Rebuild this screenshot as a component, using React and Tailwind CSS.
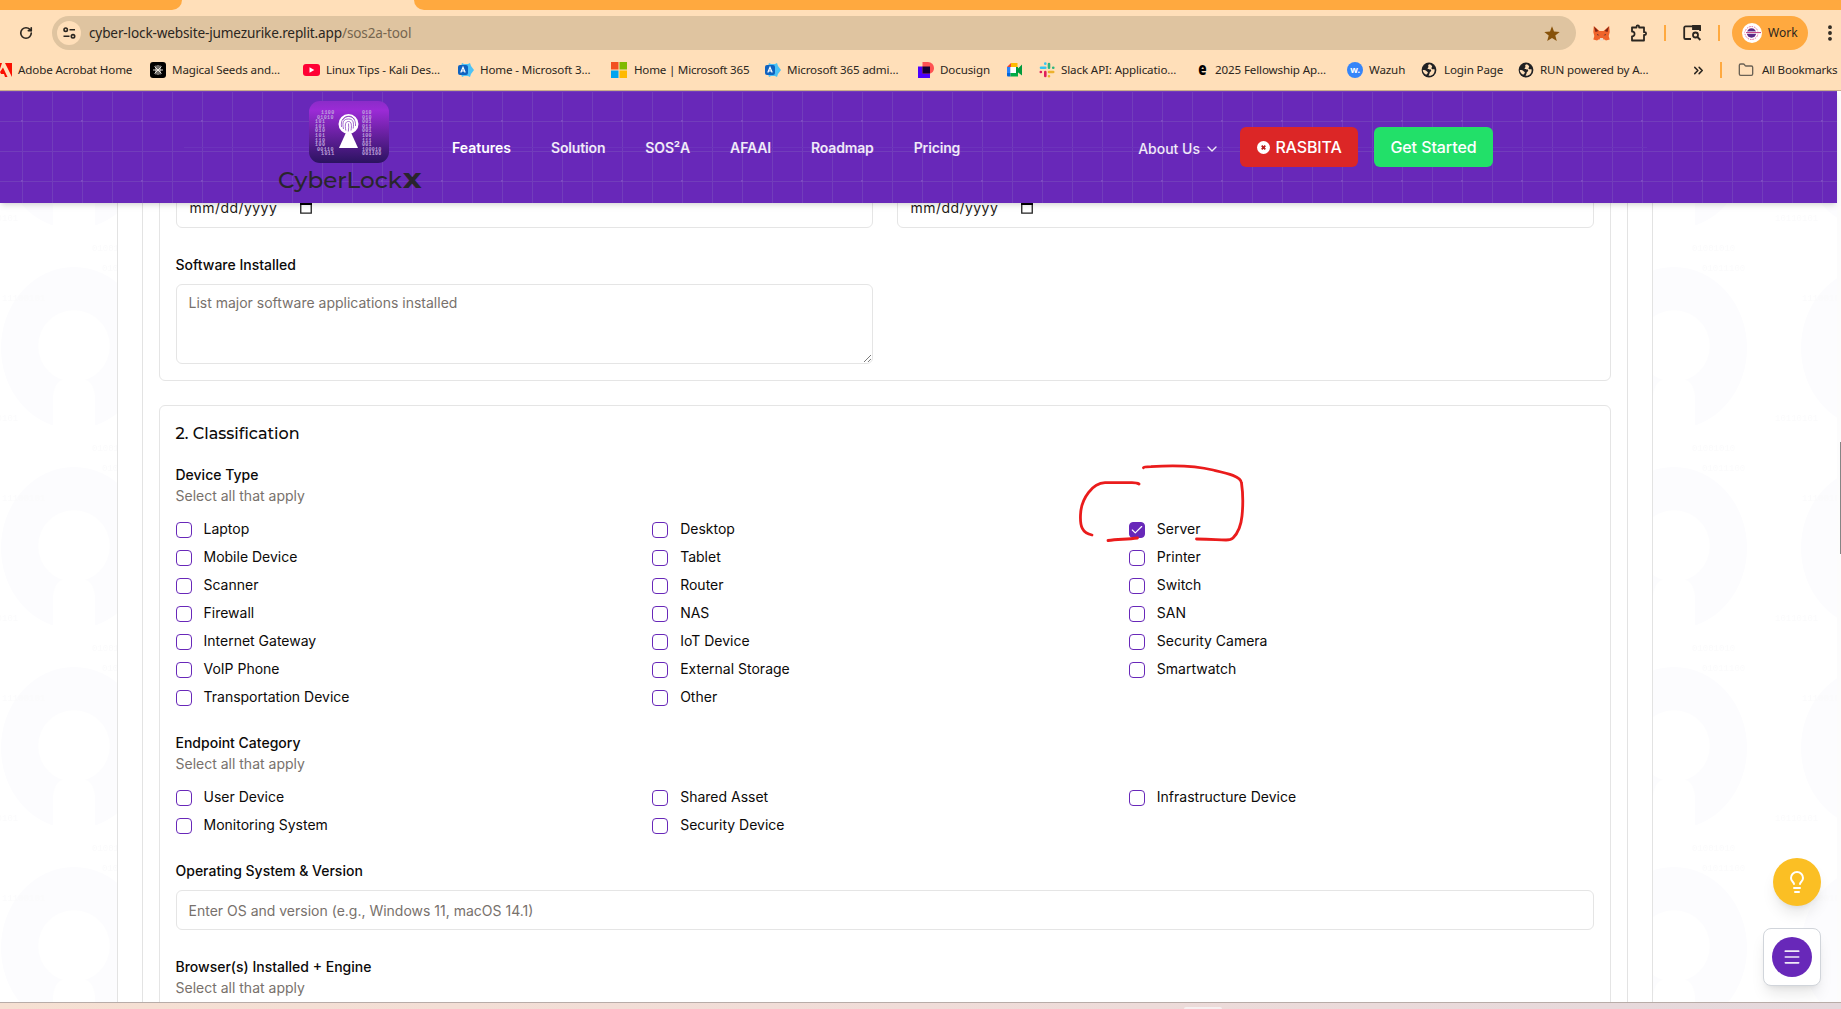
import React from "react";
import { RotateCw, ChevronsRight, Folder, ChevronDown, Check, Lightbulb, Menu, EllipsisVertical } from "lucide-react";

const INTER = "font-['Inter',sans-serif]";

function Azure() {
  return (
    <svg width="16" height="16" viewBox="0 0 16 16">
      <path d="M4 1l2 1h4l2-1 1 3 3 4-3 4-1 3-2-1H6l-2 1-1-3V4z" fill="#4cc2f5" />
      <rect x="0" y="3" width="10" height="10" rx="2" fill="#0f62c0" />
      <path d="M2.8 10.5L5 5.2l2.2 5.3M3.6 9h2.8" stroke="#fff" strokeWidth="1.2" fill="none" />
    </svg>
  );
}

function Globe() {
  return (
    <svg width="16" height="16" viewBox="0 0 16 16">
      <circle cx="8" cy="8" r="7.4" fill="#202124" />
      <path d="M9 2.2c-2 .2-2 1.300-1.600 2.300.5 1-1.400 1.600-.6 2.500.8.8 3.200-.2 3.400 1.400 0 1.200-1.600 1.200-1.600 2.600 0 1-.6 1.800-1.200 2.600 4 .6 6.600-2.600 6.200-6.200-1-.4-2.400.4-3-.6-.6-1 1-2 .4-2.800C10.600 3.400 10 2.800 9 2.200zM1.800 8c1.400-.2 2.800.2 3.600 1 .8.900 1.800.9 1.400 2-.3.900-1.200.8-1.400 1.800C3.200 12 1.900 10 1.800 8z" fill="#ffdfb9" />
    </svg>
  );
}

const bookmarks = [
  { x: "w-[150px]", gap: "gap-[6px]", label: "Adobe Acrobat Home", icon: (
    <svg width="12" height="16" viewBox="0 0 12 16"><path d="M0 1h2L0 7zM5 1h7v14zM3 5.500l4.500 9.500H5L4 12H1L0 10z" fill="#fa0f00" /></svg>) },
  { x: "w-[153px]", gap: "gap-[6px]", label: "Magical Seeds and...", icon: (
    <svg width="16" height="16" viewBox="0 0 16 16"><rect width="16" height="16" rx="3" fill="#000" /><path d="M8 3v10M3 8h10M4.500 4.500l7 7M11.500 4.500l-7 7M6 3.500v9M10 3.500v9" stroke="#f3eee8" strokeWidth=".9" /></svg>) },
  { x: "w-[155px]", gap: "gap-[6px]", label: "Linux Tips - Kali Des...", icon: (
    <svg width="17" height="12" viewBox="0 0 17 12"><rect width="17" height="12" rx="3" fill="#ff0033" /><path d="M6.500 3.300v5.400L11.300 6z" fill="#fff" /></svg>) },
  { x: "w-[153px]", gap: "gap-[6px]", label: "Home - Microsoft 3...", icon: <Azure /> },
  { x: "w-[154px]", gap: "gap-[7px]", label: "Home | Microsoft 365", tight: true, icon: (
    <svg width="16" height="16" viewBox="0 0 16 16"><path d="M0 0h7.500v7.500H0z" fill="#f25022" /><path d="M8.500 0H16v7.500H8.500z" fill="#7fba00" /><path d="M0 8.500h7.500V16H0z" fill="#00a4ef" /><path d="M8.500 8.500H16V16H8.500z" fill="#ffb900" /></svg>) },
  { x: "w-[153px]", gap: "gap-[6px]", label: "Microsoft 365 admi...", icon: <Azure /> },
  { x: "w-[89px]", gap: "gap-[6px]", label: "Docusign", icon: (
    <svg width="16" height="16" viewBox="0 0 16 16"><path d="M0 4.500h12V16H0z" fill="#4c00ff" /><path d="M4.500 0H10a6 6 0 016 6c0 3-2 5.500-4.500 5.500h-7z" fill="#ff5252" /><path d="M4.500 4.500h7.500v7h-7.500z" fill="#130032" /></svg>) },
  { x: "w-[32px]", gap: "gap-0", label: "", icon: (
    <svg width="15" height="14" viewBox="0 0 15 14"><path d="M0 4l4-4v4z" fill="#ea4335" /><path d="M0 4h3.500v6H0z" fill="#2684fc" /><path d="M0 10h3.500v3.500H1a1 1 0 01-1-1z" fill="#0066da" /><path d="M4 0h6.500v4H4z" fill="#ffba00" /><path d="M3.500 10H11v3.500H3.500z" fill="#00ac47" /><path d="M3.500 4H9v6H3.500z" fill="#fff" /><path d="M9 4h2v6H9zM10.500 6L15 1.500v11L10.500 9z" fill="#009a3e" /></svg>) },
  { x: "w-[158px]", gap: "gap-[6px]", label: "Slack API: Applicatio...", icon: (
    <svg width="16" height="16" viewBox="0 0 16 16" strokeWidth="2.600" strokeLinecap="round"><path d="M6.300 1.600v.1M6.300 5.800H2" stroke="#36c5f0" /><path d="M10 2v3.800M14.200 5.800h.1" stroke="#2eb67d" /><path d="M10 10h4.200M10 14.200v.1" stroke="#ecb22e" /><path d="M1.800 10h.1M6.300 10v4" stroke="#e01e5a" /></svg>) },
  { x: "w-[150px]", gap: "gap-[9px]", label: "2025 Fellowship Ap...", icon: <span className="-mt-[3px] w-[9px] scale-x-75 text-[18px] leading-4 font-black text-black">e</span> },
  { x: "w-[74px]", gap: "gap-[6px]", label: "Wazuh", icon: <span className="flex h-4 w-4 items-center justify-center rounded-full bg-[#3585f9] text-[9px] font-bold text-white">w.</span> },
  { x: "w-[97px]", gap: "gap-[7px]", label: "Login Page", icon: <Globe /> },
  { x: "w-[173px]", gap: "gap-[6px]", label: "RUN powered by A...", icon: <Globe /> },
];

function Chrome() {
  return (
    <div className="h-[91px] border-b border-[#c9ad8b] bg-[#ffdfb9] font-['Noto_Sans',sans-serif] text-[#2b2620]">
      <div className="flex h-[10px] justify-between">
        <div className="w-[182px] rounded-br-[10px] bg-[#ffa93f]" />
        <div className="w-[1427px] rounded-bl-[10px] bg-[#ffa93f]" />
      </div>
      <div className="mt-[6px] flex h-[34px] items-center">
        <RotateCw className="ml-[19px] h-[14px] w-[14px] shrink-0" strokeWidth={2.8} />
        <div className="ml-[19px] flex h-[34px] w-[1524px] shrink-0 items-center rounded-full bg-[#dfc4a0]">
          <div className="ml-[5px] flex h-6 w-6 shrink-0 items-center justify-center rounded-full bg-[#ffdfb9]">
            <svg width="13" height="12" viewBox="0 0 13 12" fill="none" stroke="#2b2620" strokeWidth="1.600"><circle cx="2.700" cy="2.700" r="1.700" /><path d="M6.500 2.700H12M0.500 9.300h6" /><circle cx="10" cy="9.300" r="1.700" /></svg>
          </div>
          <div className="ml-[8px] w-[1455px] shrink-0 text-[13.6px] tracking-[-0.15px] whitespace-nowrap">cyber-lock-website-jumezurike.replit.app<span className="text-[#76664f]">/sos2a-tool</span></div>
          <svg className="mt-[2px] shrink-0" width="16" height="16" viewBox="0 0 16 16"><path d="M8 .3l2 5.300 5.700.3-4.400 3.600 1.500 5.500L8 11.900 3.200 15l1.500-5.500L.3 5.900 6 5.600z" fill="#87520a" /></svg>
        </div>
        <svg className="ml-[17px] shrink-0" width="17" height="15" viewBox="0 0 17 15"><path d="M.8 0l5.700 5h4l5.700-5 .5 6-1 4 1 3.500-3.700 1-1.500-1H5.500l-1.500 1-3.700-1 1-3.500-1-4z" fill="#f0632a" /><path d="M1 .5l4.500 4.500L2.500 6zM16 .5L11.500 5l3 1z" fill="#7c2416" /><path d="M4 8l2.500 1.300H4.500zM13 8l-2.500 1.300h2z" fill="#2b2a3a" /><path d="M6.500 14.500h4L10 12H7z" fill="#e9dccb" /></svg>
        <svg className="ml-[20px] shrink-0" width="18" height="18" viewBox="0 0 18 18" fill="none" stroke="#2b2620" strokeWidth="1.800" strokeLinejoin="round"><path d="M2 3.500h4.500V2.700a1.300 1.300 0 012.600 0v.8H14v4.700h.7a1.400 1.400 0 010 2.800H14v5.500H2v-4.200c3.400.2 3.400-5 0-4.800z" /></svg>
        <div className="ml-[16px] h-4 w-[2px] shrink-0 bg-[#ffa93f]" />
        <svg className="ml-[17px] shrink-0" width="19" height="16" viewBox="0 0 19 16" fill="none" stroke="#2b2620" strokeWidth="1.800"><path d="M8 14H2.500a1.300 1.300 0 01-1.300-1.300V2.700A1.300 1.300 0 012.500 1.400h13.300a1.300 1.300 0 011.300 1.300V6" /><path d="M10 1h7v3h-7z" fill="#2b2620" /><circle cx="12.500" cy="10" r="2.500" /><path d="M14.400 12l3 3" /></svg>
        <div className="ml-[16px] h-4 w-[2px] shrink-0 bg-[#ffa93f]" />
        <div className="ml-[12px] flex h-[34px] w-[76px] shrink-0 items-center gap-[6px] rounded-full bg-[#ffa93f] pl-[10px] text-[12px]">
          <svg width="20" height="20" viewBox="0 0 20 20"><circle cx="10" cy="10" r="10" fill="#fff" /><circle cx="9.500" cy="10" r="6.500" fill="none" stroke="#e4629b" strokeWidth="1" strokeDasharray="1.500 1" /><circle cx="9.500" cy="10" r="4.700" fill="#5b2a86" /><path d="M3 9.600h16" stroke="#fff" strokeWidth="2.400" /><path d="M4 9.600h15" stroke="#c0397b" strokeWidth="1" /></svg>
          Work
        </div>
        <EllipsisVertical className="ml-[12px] h-5 w-5 shrink-0" strokeWidth={2.6} />
      </div>
      <div className="mt-[11px] flex h-[18px] items-center text-[11.6px] tracking-[-0.13px] whitespace-nowrap">
        {bookmarks.map((b, i) => (
          <div key={i} className={`flex shrink-0 items-center ${b.x} ${b.gap} ${b.tight ? "tracking-[-0.22px]" : ""}`}>{b.icon}<span>{b.label}</span></div>
        ))}
        <ChevronsRight className="h-[15px] w-[15px] shrink-0" strokeWidth={2.4} />
        <div className="ml-[14px] h-4 w-[2px] shrink-0 bg-[#ffa93f]" />
        <Folder className="ml-[16px] h-4 w-4 shrink-0 text-[#6b6255]" />
        <span className="ml-[8px] tracking-[-0.2px]">All Bookmarks</span>
      </div>
    </div>
  );
}

function Logo() {
  const left = ["   1100", " 01010", "101", "101", "010", "101", "110", "100", " 00110", "   1011"];
  const right = ["010", "010", "001", "011", "001", "100", "111", "001", "100010", "001100"];
  return (
    <div className="flex w-[146px] flex-col items-center">
      <svg className="-ml-[2px]" width="80" height="62" viewBox="0 0 80 62">
        <defs>
          <linearGradient id="logoFill" x1="0" y1="0" x2="0" y2="1"><stop offset="0" stopColor="#8b2cc9" /><stop offset=".15" stopColor="#9b2bd6" /><stop offset="1" stopColor="#2b1360" /></linearGradient>
        </defs>
        <rect width="80" height="62" rx="11" fill="url(#logoFill)" />
        <g fill="#bfa3dd" fontFamily="Liberation Mono, monospace" fontSize="5">
          {left.map((t, i) => <text key={i} x={6 + (t.length - t.trimStart().length) * 2} y={13.2 + i * 4.55} textLength={t.trim().length * 3.3}>{t.trim()}</text>)}
          {right.map((t, i) => <text key={i} x="53" y={13.2 + i * 4.55} textLength={t.length * 3.2}>{t}</text>)}
        </g>
        <path d="M39.500 26l9.500 21H30z" fill="#fff" /><circle cx="39.500" cy="23" r="10" fill="#fff" />
        <g fill="none" stroke="#7b2bb8" strokeWidth=".7">
          <path d="M32.500 26c-1-8 3-10.500 7-10.500s7.500 3 7 9.500M34.500 28c-1.500-7 0-10 5-10s5.500 4 4.700 9.500M36.800 29.500c-1-6-.5-9 2.700-9s3.300 4 2.500 9M39.300 30.500c.4-3 .6-5.500.2-8M33.800 19c3-5 9-5 11.700-.5" />
        </g>
      </svg>
      <svg className="mt-[4px]" width="146" height="25" viewBox="0 0 146 25" fill="#29252c">
        <text x="1" y="20.500" textLength="124" lengthAdjust="spacingAndGlyphs" fontFamily="Montserrat, Inter, sans-serif" fontSize="21.500" fontWeight="500">CyberLock</text>
        <text x="126" y="20.500" textLength="18.500" lengthAdjust="spacingAndGlyphs" fontFamily="Montserrat, Inter, sans-serif" fontSize="21.500" fontWeight="800">X</text>
      </svg>
    </div>
  );
}

function SiteHeader() {
  return (
    <header className={`relative z-20 h-[112px] w-[1837px] bg-[#6828b9] shadow-md ${INTER}`}>
      <svg className="absolute inset-0" width="1837" height="112">
        <defs>
          <pattern id="grid" x="22" y="0" width="30" height="30" patternUnits="userSpaceOnUse">
            <path d="M.5 0v30M0 .5h30" stroke="#723dbb" />
          </pattern>
          <pattern id="dots" x="21" y="29" width="60" height="60" patternUnits="userSpaceOnUse"><rect width="2" height="2" fill="#7d4ac2" /></pattern>
        </defs>
        <rect width="1837" height="112" fill="url(#grid)" />
        <rect width="1837" height="112" fill="url(#dots)" />
        <path d="M184 56.500h1463" stroke="#6d33bc" />
      </svg>
      <div className="relative flex h-full items-center text-[14px] font-semibold text-white/90">
        <div className="ml-[277px] pb-[2px]"><Logo /></div>
        <nav className="ml-[29px] flex items-center gap-[40px] whitespace-nowrap [&>a]:tracking-[-0.15px] [&>a:first-child]:tracking-normal [&>a:first-child]:text-white">
          <a>Features</a><a>Solution</a><a>SOS²A</a><a>AFAAI</a><a>Roadmap</a><a>Pricing</a>
        </nav>
        <div className="mr-[344px] ml-auto flex items-center">
          <div className="flex items-center gap-[4px] pt-[3px] font-medium">About Us <ChevronDown className="h-4 w-4" strokeWidth={2} /></div>
          <div className="ml-[20px] flex h-10 w-[118px] items-center justify-center gap-[5px] rounded-md bg-[#dc2626] pl-px text-[16px] font-medium tracking-[-0.15px] text-white">
            <svg width="13" height="13" viewBox="0 0 13 13"><circle cx="6.500" cy="6.500" r="6.500" fill="#fff" /><path d="M4.700 4.700l3.600 3.600M8.300 4.700L4.700 8.300" stroke="#b91c1c" strokeWidth="1.800" /></svg>
            RASBITA
          </div>
          <div className="ml-[16px] flex h-10 w-[119px] items-center justify-center rounded-md bg-[#22e069] text-[16px] font-medium tracking-[-0.08px] text-white">Get Started</div>
        </div>
      </div>
    </header>
  );
}

function DateField() {
  return (
    <div className="flex h-10 items-center rounded-md border border-[#e5e5e5] px-[13px] text-[14px] text-[#1f1b19]">
      <span className="w-[110px] pb-[2px] tracking-[0.45px]">mm/dd/yyyy</span>
      <svg width="12" height="12" viewBox="0 0 12 12"><path d="M.75 1.200h10.500v10H.75z" fill="none" stroke="#222" strokeWidth="1.300" /><path d="M0 0h12v3H0z" fill="#000" /></svg>
    </div>
  );
}

function Field({ label, hint, children, className = "" }) {
  return (
    <div className={className}>
      <div className="text-[14px] leading-[14px] font-medium text-[#0c0a09]">{label}</div>
      {hint && <div className="mt-[4px] text-[14px] leading-5 text-[#78716c]">{hint}</div>}
      {children}
    </div>
  );
}

function Checks({ items, checked }) {
  return (
    <div className="mt-4 grid grid-cols-3 gap-3">
      {items.map((t) => (
        <div key={t} className="flex h-4 items-start gap-3">
          <span className={`flex h-4 w-4 items-center justify-center rounded-[4px] border border-[#6828b9] ${t === checked ? "bg-[#6828b9]" : "bg-white"}`}>
            {t === checked && <Check className="h-[14px] w-[14px] shrink-0 text-white" strokeWidth={2} />}
          </span>
          <span className="text-[14px] leading-[14px] text-[#0c0a09]">{t}</span>
        </div>
      ))}
    </div>
  );
}

const deviceTypes = ["Laptop", "Desktop", "Server", "Mobile Device", "Tablet", "Printer", "Scanner", "Router", "Switch", "Firewall", "NAS", "SAN", "Internet Gateway", "IoT Device", "Security Camera", "VoIP Phone", "External Storage", "Smartwatch", "Transportation Device", "Other"];
const categories = ["User Device", "Shared Asset", "Infrastructure Device", "Monitoring System", "Security Device"];

function Backdrop() {
  return (
    <svg className="absolute inset-0" width="1837" height="799">
      <defs>
        <pattern id="keyholes" x="-26" y="53" width="200" height="200" patternUnits="userSpaceOnUse">
          <ellipse cx="100" cy="92" rx="73" ry="81" fill="#fcfcfe" />
          <circle cx="100" cy="90" r="36" fill="#fff" />
          <path d="M79 200v-61q2-15 12-16h18q10 1 12 16v61z" fill="#fff" />
          <g fill="#fbfbfc" fontFamily="Liberation Mono, monospace" fontSize="9">
            <text x="28" y="45">11100101</text><text x="128" y="15">01011100</text><text x="1" y="165">10110101</text><text x="118" y="195">01001010</text>
          </g>
        </pattern>
      </defs>
      <rect width="1837" height="799" fill="url(#keyholes)" />
    </svg>
  );
}

function FormPage() {
  return (
    <main className={`relative flex h-[799px] w-[1837px] overflow-hidden bg-white ${INTER}`}>
      <Backdrop />
      <div className="relative ml-[116.5px] h-[799px] w-[1536px] border-x border-[#e3e3e3] bg-white px-6">
        <div className="flex h-full flex-col border-x border-[#e3e3e3] px-4">
          <section className="-mt-[40px] h-[218px] shrink-0 rounded-md border border-[#e5e5e5] px-4 pt-[24px]">
            <div className="grid grid-cols-2 gap-6"><DateField /><DateField /></div>
            <Field label="Software Installed" className="mt-[30px] w-[697px]">
              <div className="relative mt-[12px] h-20 rounded-md border border-[#e5e5e5] px-3 py-2 text-[14px] leading-5 text-[#78716c]">
                List major software applications installed
                <svg className="absolute right-[1px] bottom-[1px]" width="7" height="7" viewBox="0 0 8 8" stroke="#666"><path d="M0 8L8 0M4.500 8L8 4.500" /></svg>
              </div>
            </Field>
          </section>
          <section className="mt-6 h-[700px] shrink-0 rounded-md border border-[#e5e5e5] p-4">
            <h3 className="font-['Montserrat','Inter',sans-serif] text-[16px] leading-6 font-medium text-[#0c0a09]">2. Classification</h3>
            <Field label="Device Type" hint="Select all that apply" className="mt-[22px]"><Checks items={deviceTypes} checked="Server" /></Field>
            <Field label="Endpoint Category" hint="Select all that apply" className="mt-[30px]"><Checks items={categories} /></Field>
            <Field label="Operating System & Version" className="mt-[30px]">
              <div className="mt-[12px] flex h-10 items-center rounded-md border border-[#e5e5e5] px-3 text-[14px] text-[#78716c]">Enter OS and version (e.g., Windows 11, macOS 14.1)</div>
            </Field>
            <Field label="Browser(s) Installed + Engine" hint="Select all that apply" className="mt-[30px]" />
          </section>
        </div>
      </div>
      <svg className="absolute top-[255px] left-[1075px]" width="175" height="90" viewBox="0 0 175 90" fill="none" stroke="#ea1c1c" strokeWidth="2.800" strokeLinecap="round" strokeLinejoin="round">
        <path d="M64 26Q62 24.700 57 24.700H30C18 25 6 40 5.500 57C5 68 7 75 17 77" />
        <path d="M68.500 9.700Q69 8.700 76 8.600C99 7 122 8 138 12C151 15 166 18 166.500 25C168 35 168 48 167 58C166 68 162 76 158 80Q156 82 151 82C142 82 138 81 121.500 81" />
        <path d="M33 82.500C43 81 52 81.500 62.500 80" />
      </svg>
      <div className="absolute top-[655px] right-[16px] flex h-12 w-12 items-center justify-center rounded-full bg-[#fbbf24] shadow-lg">
        <Lightbulb className="h-6 w-6 text-white" strokeWidth={2} />
      </div>
      <div className="absolute top-[725px] right-[16px] flex h-[58px] w-[58px] items-center justify-center rounded-lg border border-[#d1d5db] bg-white shadow-lg">
        <span className="flex h-10 w-10 items-center justify-center rounded-full bg-[#6828b9]"><Menu className="h-5 w-5 text-white/90" strokeWidth={2} /></span>
      </div>
    </main>
  );
}

export default function App() {
  return (
    <div className="h-[1009px] w-[1841px] overflow-hidden bg-[#fcfcfc]">
      <Chrome />
      <SiteHeader />
      <div className="flex h-[799px]">
        <FormPage />
        <div className="ml-[3px] mt-[239px] h-[112px] w-px bg-[#858585]" />
      </div>
      <div className="flex h-[7px] items-end border-t border-[#b8aca8] bg-gradient-to-r from-[#f6e0d2] via-[#f0dcd8] to-[#e4d8dc]">
        <div className="ml-[1184px] h-[2px] w-[38px] rounded-t-[2px] bg-[#f6f0f0]" />
      </div>
    </div>
  );
}
